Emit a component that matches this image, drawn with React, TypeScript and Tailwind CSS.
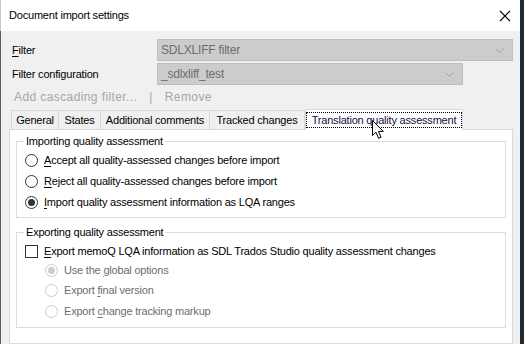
import React from 'react';

const font = { fontFamily: '"Liberation Sans", Arial, sans-serif' };

function Radio({ checked, disabled }: { checked?: boolean; disabled?: boolean }) {
  const ring = disabled ? 'border-[#cccccc]' : 'border-[#333333]';
  const dot = disabled ? 'bg-[#cccccc]' : 'bg-[#333333]';
  return (
    <span className={`w-[13px] h-[13px] rounded-full border bg-white flex items-center justify-center shrink-0 ${ring}`}>
      {checked && <span className={`w-[7px] h-[7px] rounded-full ${dot}`} />}
    </span>
  );
}

function Combo({ text, width }: { text: string; width: string }) {
  return (
    <div className={`${width} h-[22px] bg-[#cccccc] border border-[#bfbfbf] flex items-center justify-between pl-[3px] pr-[8px] text-[#6d6d6d] text-[12px]`}>
      <span>{text}</span>
      <svg width="9" height="5" viewBox="0 0 9 5" className="text-[#a0a0a0]">
        <path d="M0.5 0.5 L4.5 4.5 L8.5 0.5" fill="none" stroke="currentColor" strokeWidth="1" />
      </svg>
    </div>
  );
}

function Group({ title, children, height }: { title: string; children: React.ReactNode; height: string }) {
  return (
    <div className={`relative border border-[#dcdcdc] ${height} mx-[6px]`}>
      <span className="absolute -top-[8px] left-[7px] bg-white px-[2px] leading-[15px]">{title}</span>
      {children}
    </div>
  );
}

const tabs = ['General', 'States', 'Additional comments', 'Tracked changes'];
const tabWidths = ['w-[48px]', 'w-[42px]', 'w-[109px]', 'w-[95px]'];

export default function App() {
  return (
    <div className="w-[524px] h-[344px] bg-[#1d2a36] overflow-hidden text-[11px] tracking-[-0.2px] text-black" style={font}>
      <div className="w-[520px] h-full flex flex-col">
        <div className="h-[31px] bg-white border-l border-[#c8c8c8] flex items-center justify-between pl-[8px] pr-[9px]">
          <span>Document import settings</span>
          <svg width="12" height="12" viewBox="0 0 12 12">
            <path d="M1 1 L11 11 M11 1 L1 11" stroke="#000" strokeWidth="1.1" />
          </svg>
        </div>

        <div className="flex-1 bg-[#f0f0f0] border-l border-[#5c5c5c] flex flex-col whitespace-nowrap">
          <div className="flex items-center h-[22px] mt-[8px] pl-[11px]">
            <span className="w-[145px]"><u className="underline-offset-2">F</u>ilter</span>
            <Combo text="SDLXLIFF filter" width="w-[356px]" />
          </div>
          <div className="flex items-center h-[22px] mt-[2px] pl-[11px]">
            <span className="w-[145px]">Filter configuration</span>
            <Combo text="_sdlxliff_test" width="w-[306px]" />
          </div>
          <div className="flex items-center h-[20px] mt-[2px] pl-[13px] text-[12px] tracking-[0.4px] text-[#a6a6a6]">
            <span>Add cascading filter...</span>
            <span className="px-[12px]">|</span>
            <span>Remove</span>
          </div>

          <div className="flex items-end h-[22px] pl-[10px]">
            {tabs.map((t, i) => (
              <div
                key={t}
                className={`${tabWidths[i]} h-[19px] border border-b-0 border-[#d9d9d9] ${i > 0 ? 'border-l-0' : ''} flex items-center justify-center`}
              >
                {t}
              </div>
            ))}
            <div className="relative w-[158px] h-[21px] -mb-px bg-white border border-b-0 border-[#d9d9d9] flex items-center justify-center z-10">
              <span className="border border-dotted border-black px-[5px] leading-[14px] text-[#1a0a3c]">
                Translation quality assessment
              </span>
              <svg className="absolute left-[66px] top-[10px]" width="13" height="20" viewBox="0 0 13 20">
                <path
                  d="M0.5 0.5 L0.5 15.5 L4 12.2 L6.6 18.3 L9 17.3 L6.5 11.4 L11.3 11.4 Z"
                  fill="#fff"
                  stroke="#000"
                  strokeWidth="1"
                  strokeLinejoin="miter"
                />
              </svg>
            </div>
          </div>

          <div className="flex-1 ml-[8px] w-[504px] bg-white border border-[#d9d9d9] pt-[11px] flex flex-col">
            <Group title="Importing quality assessment" height="h-[77px]">
              <div className="flex flex-col pl-[8px] pt-[11px] gap-[7px]">
                <label className="flex items-center gap-[6px] h-[14px]">
                  <Radio />
                  <span><u className="underline-offset-2">A</u>ccept all quality-assessed changes before import</span>
                </label>
                <label className="flex items-center gap-[6px] h-[14px]">
                  <Radio />
                  <span><u className="underline-offset-2">R</u>eject all quality-assessed changes before import</span>
                </label>
                <label className="flex items-center gap-[6px] h-[14px]">
                  <Radio checked />
                  <span><u className="underline-offset-2">I</u>mport quality assessment information as LQA ranges</span>
                </label>
              </div>
            </Group>

            <div className="h-[14px] shrink-0" />

            <Group title="Exporting quality assessment" height="h-[96px]">
              <div className="flex flex-col pt-[11px]">
                <label className="flex items-center gap-[6px] pl-[8px] h-[14px]">
                  <span className="w-[13px] h-[13px] border border-[#333333] bg-white shrink-0" />
                  <span><u className="underline-offset-2">E</u>xport memoQ LQA information as SDL Trados Studio quality assessment changes</span>
                </label>
                <div className="flex flex-col pl-[28px] pt-[5px] gap-[6.5px] text-[#6d6d6d]">
                  <label className="flex items-center gap-[6px] h-[14px]">
                    <Radio checked disabled />
                    <span>Use the <u className="underline-offset-2">g</u>lobal options</span>
                  </label>
                  <label className="flex items-center gap-[6px] h-[14px]">
                    <Radio disabled />
                    <span>Export <u className="underline-offset-2">f</u>inal version</span>
                  </label>
                  <label className="flex items-center gap-[6px] h-[14px]">
                    <Radio disabled />
                    <span>Export <u className="underline-offset-2">c</u>hange tracking markup</span>
                  </label>
                </div>
              </div>
            </Group>
          </div>
        </div>
      </div>
    </div>
  );
}
